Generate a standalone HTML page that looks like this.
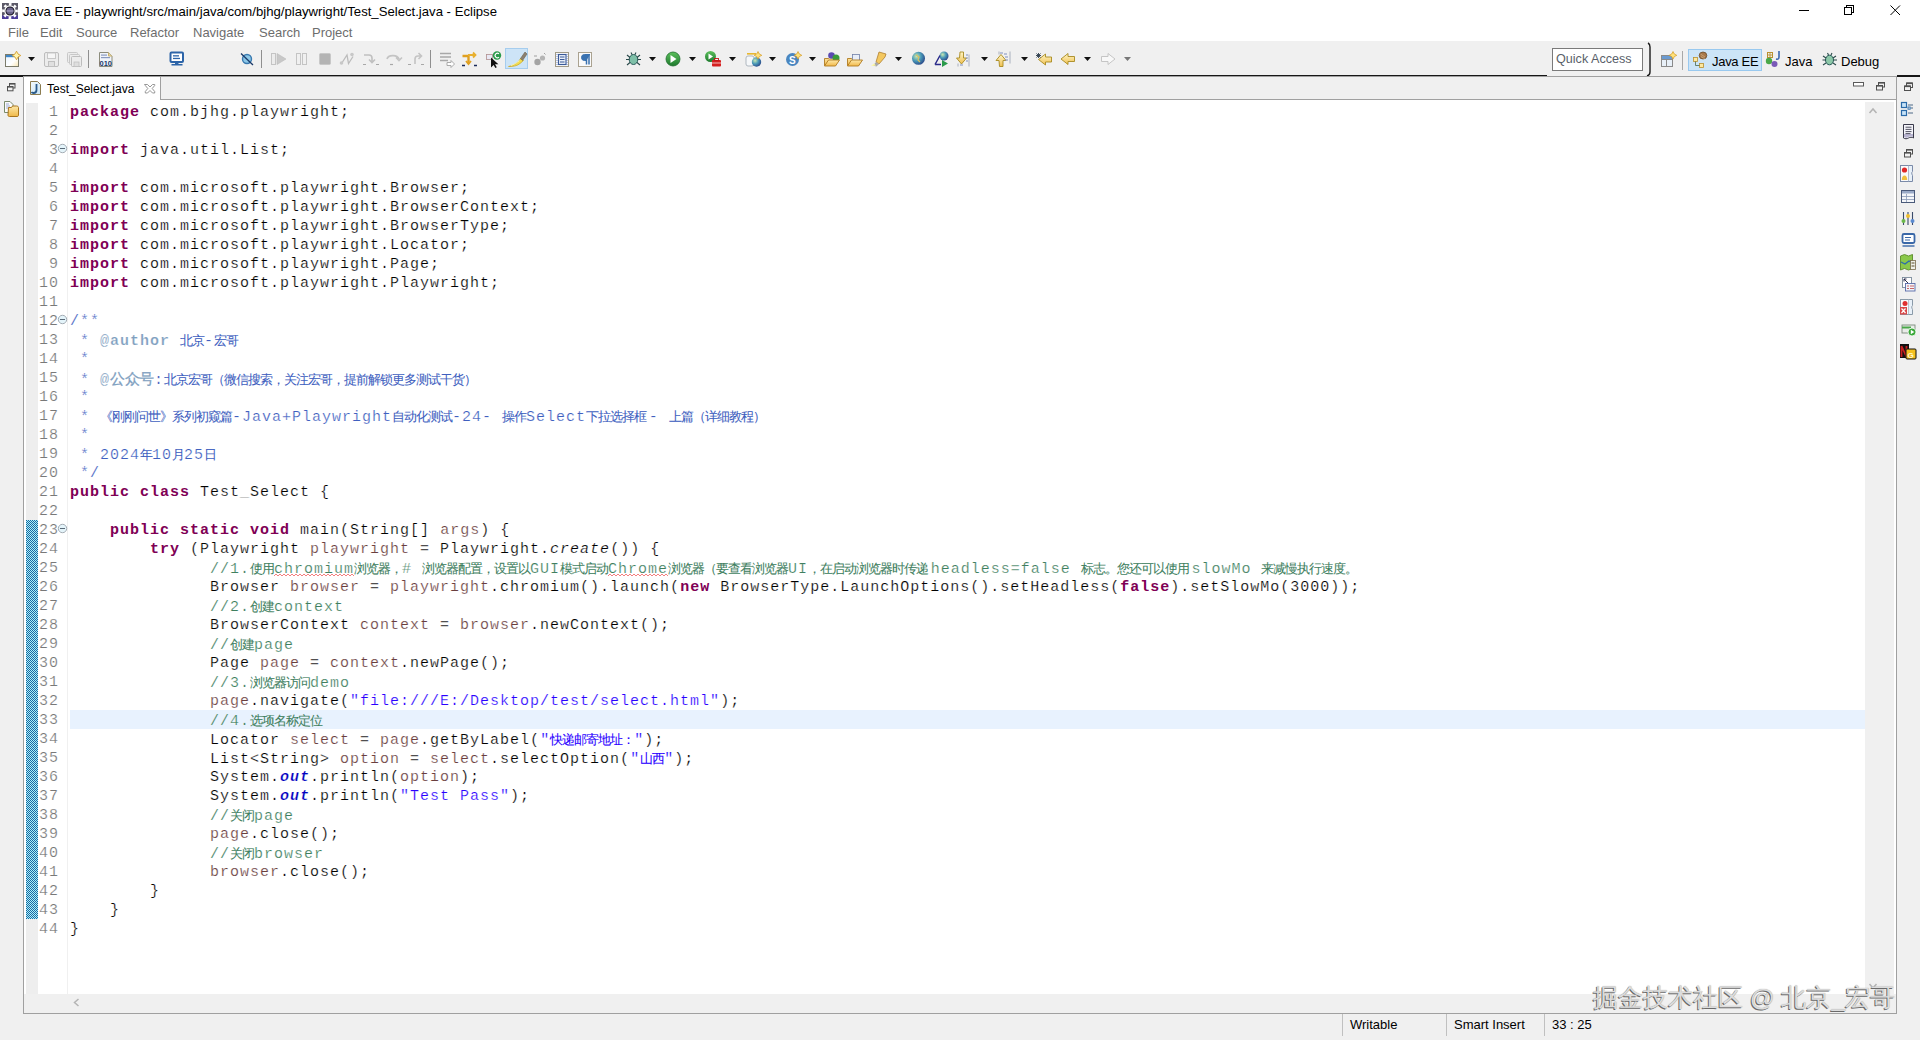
<!DOCTYPE html>
<html><head><meta charset="utf-8">
<style>
*{margin:0;padding:0;box-sizing:border-box}
html,body{width:1920px;height:1040px;overflow:hidden;background:#f0f0f0;font-family:"Liberation Sans",sans-serif;position:relative}
.a{position:absolute}
#titlebar{left:0;top:0;width:1920px;height:21px;background:#fff}
#menubar{left:0;top:21px;width:1920px;height:20px;background:#fff}
.menu{position:absolute;top:25px;font-size:13px;color:#6d6d6d}
#code{left:70px;top:103px;font-family:"Liberation Mono",monospace;font-size:15px;letter-spacing:1px;line-height:19px;color:#000;-webkit-text-stroke:0.22px #fff}
#code div{height:19px;white-space:pre}
#lnum{left:28px;top:103px;width:31px;font-family:"Liberation Mono",monospace;font-size:15px;letter-spacing:1px;line-height:19px;color:#787878;text-align:right;-webkit-text-stroke:0.2px #fff}
#lnum div{height:19px}
.k{color:#7f0055;font-weight:bold;-webkit-text-stroke:0}
.c{color:#3f7f5f}
.d{color:#3f5fbf}
.t{color:#7f9fbf;font-weight:bold}
.s{color:#2a00ff}
.v{color:#6a3e3e}
.f{color:#0000c0;font-style:italic;font-weight:bold}
.i{font-style:italic}
.z{font-family:"Liberation Sans",sans-serif;font-size:13px;letter-spacing:-1px;-webkit-text-stroke:0.08px currentColor}
</style></head><body>
<div class="a" id="titlebar"></div>
<div class="a" id="menubar"></div>
<svg class="a" style="left:0;top:0" width="1920" height="100" viewBox="0 0 1920 100">
<defs>
<linearGradient id="gY" x1="0" y1="0" x2="0" y2="1"><stop offset="0" stop-color="#fff6c8"/><stop offset="1" stop-color="#f0c050"/></linearGradient>
<linearGradient id="gG" x1="0" y1="0" x2="0" y2="1"><stop offset="0" stop-color="#5cc05c"/><stop offset="1" stop-color="#1e7a2e"/></linearGradient>
<linearGradient id="gF" x1="0" y1="0" x2="0" y2="1"><stop offset="0" stop-color="#fde8a8"/><stop offset="1" stop-color="#f2b94a"/></linearGradient>
<radialGradient id="gGlobe" cx="0.35" cy="0.35" r="0.7"><stop offset="0" stop-color="#c8e8b0"/><stop offset="0.5" stop-color="#4a9ab8"/><stop offset="1" stop-color="#2a4a8a"/></radialGradient>
<linearGradient id="gNew" x1="0" y1="0" x2="1" y2="1"><stop offset="0" stop-color="#e8f4ff"/><stop offset="0.6" stop-color="#ffffff"/><stop offset="1" stop-color="#f6e4b0"/></linearGradient>
<linearGradient id="gB" x1="0" y1="0" x2="0" y2="1"><stop offset="0" stop-color="#eaf4fc"/><stop offset="1" stop-color="#b8d8f0"/></linearGradient>
</defs>
<!-- title bar icon -->
<rect x="2" y="3" width="16" height="16" fill="#5c5a68"/>
<rect x="2" y="15.5" width="16" height="3.5" fill="#4b3c9a"/>
<circle cx="10" cy="11" r="6.7" fill="none" stroke="#fff" stroke-width="2.4" stroke-dasharray="2.6 2.66" transform="rotate(-11 10 11)"/>
<circle cx="10" cy="11" r="5.8" fill="#fff"/>
<circle cx="10" cy="11" r="4" fill="#6a6488" stroke="#15131f" stroke-width="1.1"/>
<rect x="6.5" y="10.2" width="7" height="1.5" fill="#9e98bc"/>
<!-- window controls -->
<rect x="1799" y="10" width="10" height="1" fill="#000"/>
<rect x="1846.5" y="5.5" width="7" height="7" fill="none" stroke="#000" stroke-width="1"/>
<rect x="1844.5" y="7.5" width="7" height="7" fill="#fff" stroke="#000" stroke-width="1"/>
<path d="M1890.5 5.5L1900 15M1900 5.5L1890.5 15" stroke="#000" stroke-width="1"/>

<!-- toolbar -->
<g>
<!-- new -->
<rect x="5.5" y="54.5" width="13" height="12" fill="url(#gNew)" stroke="#7b7b6b"/>
<rect x="6" y="55" width="9" height="2.2" fill="#3e86c8"/>
<path d="M16.5 51.2l1.5 2.8 2.8 1.5-2.8 1.5-1.5 2.8-1.5-2.8-2.8-1.5 2.8-1.5z" fill="#fff4b0" stroke="#d8a030" stroke-width="0.9"/>
<path d="M28 57h7l-3.5 4z" fill="#111"/>
<!-- save (disabled) -->
<rect x="44.5" y="52.5" width="14" height="14" rx="1.5" fill="#ececec" stroke="#bdbdbd"/>
<rect x="47.5" y="53" width="8" height="5.5" fill="#f6f6f6" stroke="#c8c8c8"/>
<rect x="48.5" y="61.5" width="6" height="5" fill="#e0e0e0" stroke="#c0c0c0"/>
<!-- save all -->
<rect x="67.5" y="52.5" width="10" height="10" rx="1" fill="#ececec" stroke="#c8c8c8"/>
<rect x="69.5" y="54.5" width="10" height="10" rx="1" fill="#ececec" stroke="#c8c8c8"/>
<rect x="71.5" y="56.5" width="10" height="10" rx="1" fill="#ececec" stroke="#bdbdbd"/>
<rect x="74" y="62" width="5" height="4.5" fill="#dedede" stroke="#c0c0c0" stroke-width="0.8"/>
<!-- sep -->
<rect x="88" y="50" width="1" height="18" fill="#8f8f8f"/>
<!-- binary -->
<path d="M99.5 52.5h9l3.5 3.5v10.5h-12.5z" fill="#f0f4fa" stroke="#8c8c7c"/>
<path d="M108.5 52.5v3.5h3.5" fill="#e8d8a0" stroke="#c8b070"/>
<rect x="101" y="54.5" width="6" height="1.2" fill="#8a9ac0"/><rect x="101" y="57" width="9" height="1.2" fill="#8a9ac0"/>
<text x="99.5" y="66" font-family="Liberation Sans" font-weight="bold" font-size="7.5" fill="#1a3a6a">010</text>
<!-- monitor -->
<rect x="170.5" y="52.5" width="12.5" height="9.5" rx="1" fill="#fff" stroke="#2c64a8" stroke-width="2"/>
<rect x="173" y="55.2" width="6" height="1.3" fill="#2c64a8"/><rect x="173" y="57.8" width="7" height="1.3" fill="#2c64a8"/>
<rect x="175" y="62.5" width="3.5" height="1.5" fill="#2c64a8"/><rect x="171.5" y="64" width="11" height="1.5" fill="#2c64a8"/>
<!-- skip breakpoints -->
<circle cx="247" cy="59" r="4.5" fill="#8cc8e8" stroke="#3a7ab0" stroke-width="1.4"/>
<path d="M241 53.5L253 65" stroke="#1a3a6a" stroke-width="1.3"/>
<rect x="261" y="50" width="1" height="18" fill="#8f8f8f"/>
<!-- resume disabled -->
<rect x="271.5" y="53.5" width="4" height="11" fill="#ececec" stroke="#c4c4c4"/>
<path d="M277 53.5l9 5.5-9 5.5z" fill="#c8c8c8" stroke="#bcbcbc" stroke-width="0.6"/>
<!-- suspend -->
<rect x="296.5" y="53.5" width="4" height="11" fill="#f0f0f0" stroke="#c4c4c4"/>
<rect x="302.5" y="53.5" width="4" height="11" fill="#f0f0f0" stroke="#c4c4c4"/>
<!-- terminate -->
<rect x="319.5" y="53.5" width="11" height="11" rx="1.2" fill="#b4b4b4" stroke="#c8c8c8"/>
<!-- disconnect -->
<path d="M341.5 63.5L347 55l1.5 8.5 4.5-7" fill="none" stroke="#bcbcbc" stroke-width="1.3"/>
<circle cx="341.5" cy="63" r="1.8" fill="#c8c8c8"/><circle cx="352" cy="54.5" r="1.8" fill="#c8c8c8"/>
<!-- step into -->
<path d="M364 55h5c2 0 3 1 3 3v4m-3-2.5l3 3 3-3" fill="none" stroke="#c0c0c0" stroke-width="1.6"/>
<path d="M363 64.5h3M376 64.5h3" stroke="#a8a8a8" stroke-width="1.2"/>
<!-- step over -->
<path d="M387 59c1-4 10-5 12 0m-3-1.5l3 3 3-3" fill="none" stroke="#c4c4c4" stroke-width="1.6"/>
<path d="M390 64.5h3" stroke="#a8a8a8" stroke-width="1.2"/>
<!-- step return -->
<path d="M415 64v-5c0-2 1-3 3-3h3m-2.5-3l3 3-3 3" fill="none" stroke="#c4c4c4" stroke-width="1.6"/>
<path d="M408 64.5h3M421 64.5h3" stroke="#a8a8a8" stroke-width="1.2"/>
<rect x="430" y="50" width="1" height="18" fill="#8f8f8f"/>
<!-- step filters -->
<path d="M440 53.5h11M440 57h11M440 60.5h8" stroke="#a8a8a8" stroke-width="1.4"/>
<path d="M447 62.5h4v-2l3.5 3.5-3.5 3.5v-2h-4z" fill="#fff" stroke="#a0a0a0" stroke-width="0.9"/>
<!-- drop to frame -->
<path d="M462.5 56h6v8" fill="none" stroke="#e0a020" stroke-width="2.4"/>
<path d="M466 61l2.5 3 2.5-3" fill="none" stroke="#e0a020" stroke-width="1.8"/>
<path d="M468 55h7m-2-2.5l2.5 2.5-2.5 2.5" fill="none" stroke="#e8b030" stroke-width="1.8"/>
<path d="M462 65.5h3M474 65.5h3" stroke="#1a2a5a" stroke-width="1.4"/>
<!-- checkin -->
<rect x="486.5" y="54.5" width="6" height="5" fill="#e8e8f4" stroke="#b09090" stroke-width="0.8"/>
<circle cx="497" cy="55.5" r="4.2" fill="#2a9a4a"/>
<path d="M499 53.8a2.3 2.3 0 1 0 0 3.4" fill="none" stroke="#fff" stroke-width="1.1"/>
<path d="M491 57.5v10l2.6-2.6 1.8 3.1 1.4-0.8-1.8-3h3.4z" fill="#111"/>
<!-- highlighted toggle -->
<rect x="505.5" y="48.5" width="22" height="20" fill="#cde4f7" stroke="#a6cdee"/>
<path d="M508.5 66.5c3-0.5 7-2 10-5l2.5-3.5 2.5 2.5-3.5 3c-3 2.5-7 3.2-11.5 3z" fill="#f2dc50" stroke="#c8a820" stroke-width="0.7"/>
<path d="M511 65.5c3-1 6-2.5 8.5-5" stroke="#fff6a8" stroke-width="1" fill="none"/>
<path d="M520.5 58.5l4.5-6.5 2 2-4.5 6.5z" fill="#8c8070" stroke="#6a6050" stroke-width="0.6"/>
<!-- grey dots -->
<circle cx="537.5" cy="62" r="3.2" fill="#a4a4a4"/><circle cx="542.5" cy="58" r="2.6" fill="#b4b4b4"/>
<path d="M534 56h3M544 53l1.5 1.5" stroke="#a0a0a0" stroke-width="1"/>
<!-- block select -->
<rect x="555.5" y="52.5" width="13" height="14" fill="#f8f8fa" stroke="#a09a88"/>
<rect x="558.5" y="54.5" width="7.5" height="10" fill="#e8eef8" stroke="#3a5a98" stroke-width="1.1"/>
<path d="M560 57h4.5M560 59.5h4.5M560 62h4.5" stroke="#3a5a98" stroke-width="1.1"/>
<path d="M557 54v11M567 54v11" stroke="#5a7ab8" stroke-width="0.8" stroke-dasharray="1 1"/>
<!-- pilcrow -->
<rect x="578.5" y="52.5" width="13" height="14" fill="#fafafa" stroke="#aaa290"/>
<path d="M586.5 54.5v10M589 54.5v10" stroke="#3a72b0" stroke-width="1.5"/>
<path d="M590 54.5h-5.5a3 3 0 0 0 0 6h2" fill="#3a72b0" stroke="#3a72b0" stroke-width="1"/>
<!-- bug -->
<ellipse cx="633.5" cy="59.5" rx="4.3" ry="5" fill="#7ec0a8" stroke="#2a5a5a" stroke-width="1"/>
<path d="M627 55l3 2.5M640 55l-3 2.5M626 59.5h3.5M641 59.5h-3.5M627 65l3-2.5M640 65l-3-2.5M631 52.5l1 2M636 52.5l-1 2" stroke="#2a4a4a" stroke-width="1.1"/>
<path d="M649 57h7l-3.5 4z" fill="#111"/>
<!-- run -->
<circle cx="673" cy="59" r="7" fill="url(#gG)" stroke="#1f6f2f" stroke-width="0.8"/>
<path d="M670.5 55v8l6-4z" fill="#fff"/>
<path d="M689 57h7l-3.5 4z" fill="#111"/>
<!-- run server -->
<circle cx="710.5" cy="56.5" r="5.5" fill="url(#gG)"/>
<path d="M708.5 53.5v6l4.5-3z" fill="#fff"/>
<rect x="712" y="60" width="9" height="6.5" rx="1" fill="#d42020"/>
<rect x="714.5" y="58.5" width="4" height="2" fill="none" stroke="#c01818" stroke-width="0.9"/>
<path d="M712 63h9" stroke="#fff" stroke-width="0.7"/>
<path d="M729 57h7l-3.5 4z" fill="#111"/>
<!-- new server -->
<rect x="746" y="56" width="8" height="10" rx="2" fill="#f6f8fa" stroke="#b0b8c0"/>
<rect x="747" y="53" width="9" height="1.6" fill="#e8b830"/>
<circle cx="756.5" cy="62" r="4.7" fill="url(#gGlobe)"/>
<path d="M758 51.5l1.3 2.5 2.5 1.3-2.5 1.3-1.3 2.5-1.3-2.5-2.5-1.3 2.5-1.3z" fill="#ffe27a" stroke="#d49a20" stroke-width="0.7"/>
<path d="M769 57h7l-3.5 4z" fill="#111"/>
<!-- S icon -->
<circle cx="792.5" cy="59.5" r="6.5" fill="#4a86c0"/>
<text x="789" y="63.5" font-family="Liberation Sans" font-weight="bold" font-size="10" fill="#fff">S</text>
<path d="M798 51.5l1.3 2.5 2.5 1.3-2.5 1.3-1.3 2.5-1.3-2.5-2.5-1.3 2.5-1.3z" fill="#ffe27a" stroke="#d49a20" stroke-width="0.7"/>
<path d="M809 57h7l-3.5 4z" fill="#111"/>
<!-- folder + globes -->
<path d="M824.5 58.5h4l1 -1h4v8h-9z" fill="url(#gF)" stroke="#b07a20" stroke-width="0.9"/>
<circle cx="831.5" cy="55.5" r="3.3" fill="#5a4ab0"/><circle cx="836" cy="58" r="3.5" fill="#3a9a3a"/>
<path d="M824.5 66h11l4-6h-11z" fill="url(#gF)" stroke="#b07a20" stroke-width="0.9"/>
<!-- folder -->
<path d="M847.5 58.5h4l1 -1h6v8h-11z" fill="url(#gF)" stroke="#b07a20" stroke-width="0.9"/>
<rect x="852.5" y="54.5" width="7" height="6" fill="#e8eef8" stroke="#7080a8" stroke-width="0.8"/>
<path d="M847.5 66h11l4-6h-11z" fill="url(#gF)" stroke="#b07a20" stroke-width="0.9"/>
<!-- flashlight -->
<path d="M879 52l7 2-1 3-6 7-3-2z" fill="#f4c860" stroke="#b08030" stroke-width="0.8"/>
<path d="M876 62l3 2-2.5 2.5-3.5-1z" fill="#a8a8a8"/>
<path d="M871 66l3-2.5 2 2z" fill="#fff8a0"/>
<path d="M895 57h7l-3.5 4z" fill="#111"/>
<!-- globe -->
<circle cx="918.5" cy="58.3" r="6.5" fill="url(#gGlobe)"/>
<path d="M916 55l3 2 -1 3 2 2" fill="none" stroke="#d8c060" stroke-width="1.2"/>
<!-- search/triangle -->
<circle cx="944" cy="56" r="4.5" fill="url(#gGlobe)"/>
<path d="M935 64.5l5-9M935 64.5h6" stroke="#2a2a8a" stroke-width="1.5" fill="none"/>
<path d="M942 60v7l6-3.5z" fill="#2a9a4a"/>
<!-- next annotation -->
<path d="M960 52h3.5v6h3l-5 6-5-6h3z" fill="url(#gY)" stroke="#a88a20" stroke-width="0.9"/>
<path d="M969 54.5v12M958 66.5v-3" stroke="#a0a8b8" stroke-width="0.9"/>
<path d="M966 55h2M966 58h2M966 61h2M960 65h3" stroke="#8090c0" stroke-width="1"/>
<path d="M981 57h7l-3.5 4z" fill="#111"/>
<!-- prev annotation -->
<path d="M999.5 66.5h3.5v-6h3l-5-6-5 6h3z" fill="url(#gY)" stroke="#a88a20" stroke-width="0.9"/>
<path d="M1010 51.5v12M999 51.5v3" stroke="#a0a8b8" stroke-width="0.9"/>
<path d="M1000 53h3M1004 54h3M1005 57h3M1005 60h3" stroke="#8090c0" stroke-width="1"/>
<path d="M1021 57h7l-3.5 4z" fill="#111"/>
<!-- last edit -->
<path d="M1045.5 54v3h6v5h-6v3l-7-5.5z" fill="url(#gY)" stroke="#a88a20" stroke-width="0.9"/>
<path d="M1036.5 53.5l4 4M1040.5 53.5l-4 4M1036 55.5h5M1038.5 53v5" stroke="#2a3a4a" stroke-width="0.9"/>
<!-- back -->
<path d="M1068 53.5v3h6.5v5h-6.5v3l-7-5.5z" fill="url(#gY)" stroke="#a88a20" stroke-width="0.9"/>
<path d="M1084 57h7l-3.5 4z" fill="#111"/>
<!-- forward disabled -->
<path d="M1108 53.5v3h-6.5v5h6.5v3l7-5.5z" fill="#f8f8f8" stroke="#c0c0c0" stroke-width="0.9"/>
<path d="M1124 57h7l-3.5 4z" fill="#777"/>
</g>

<!-- right side of toolbar -->
<rect x="1552.5" y="48.5" width="90" height="22" fill="#fff" stroke="#7a7a7a"/>
<path d="M1648 43c2 1 2 2 2 4v25c0 2 -1 3.5 -3 4" fill="none" stroke="#1a1a1a" stroke-width="1.4"/>
<!-- perspective icon -->
<rect x="1661.5" y="55.5" width="11" height="11" fill="#e8f0f8" stroke="#8a8a8a"/>
<path d="M1661.5 59.5h11M1666.5 55.5v11" stroke="#8a8a8a" stroke-width="1"/>
<rect x="1662" y="56" width="10" height="3" fill="#6a9ad0"/>
<path d="M1673 51.5l1.3 2.5 2.5 1.3-2.5 1.3-1.3 2.5-1.3-2.5-2.5-1.3 2.5-1.3z" fill="#ffe27a" stroke="#d49a20" stroke-width="0.7"/>
<rect x="1682" y="51" width="1" height="19" fill="#a8a8a8"/>
<!-- Java EE button -->
<rect x="1688.5" y="49.5" width="73" height="21" fill="#cce4f7" stroke="#99c9ef"/>
<rect x="1693.5" y="57.5" width="4" height="4" fill="#fde8a0" stroke="#b89030" stroke-width="0.8"/>
<rect x="1699.5" y="63.5" width="4" height="4" fill="#fde8a0" stroke="#b89030" stroke-width="0.8"/>
<path d="M1695.5 61.5v4h4" fill="none" stroke="#4a6a4a" stroke-width="0.8"/>
<ellipse cx="1703" cy="55.5" rx="3.8" ry="3.5" fill="#a87848" stroke="#6a4a28" stroke-width="0.8"/>
<path d="M1700.5 54l4.5 3M1701 56.5l4 2.5" stroke="#d8b890" stroke-width="0.6"/>
<!-- Java icon -->
<rect x="1767.5" y="52.5" width="5" height="5" fill="none" stroke="#b89030" stroke-width="1"/>
<path d="M1767 55h6M1770 52v6" stroke="#b89030" stroke-width="0.9"/>
<circle cx="1769" cy="61" r="3.2" fill="#4aa84a"/>
<circle cx="1774.5" cy="64" r="3" fill="#7a5ab8"/>
<path d="M1779 51v6c0 2-1 2.5-3 2" fill="none" stroke="#3a68b0" stroke-width="1.6"/>
<!-- Debug icon -->
<ellipse cx="1829.5" cy="60" rx="4" ry="4.8" fill="#8cc8a8" stroke="#2a5a5a" stroke-width="1"/>
<path d="M1823 56l3 2M1836 56l-3 2M1822.5 60h3.5M1837 60h-3.5M1823 65l3-2M1836 65l-3-2M1827.5 53l1 2M1832 53l-1 2" stroke="#2a4a4a" stroke-width="1.1"/>
</svg>

<div class="a" style="left:0;top:75px;width:1547px;height:2px;background:#161616"></div>
<div class="a" style="left:1647px;top:75px;width:1px;height:1px;background:#161616"></div>
<div class="a" style="left:1897px;top:75px;width:23px;height:2px;background:#161616"></div>
<div class="a" style="left:1556px;top:52px;font-size:12.6px;color:#5a5f6a">Quick Access</div>
<div class="a" style="left:1712px;top:54px;font-size:13px;letter-spacing:-0.3px;color:#000">Java EE</div>
<div class="a" style="left:1785px;top:54px;font-size:13px;color:#000">Java</div>
<div class="a" style="left:1841px;top:54px;font-size:13px;color:#000">Debug</div>

<div class="a" style="left:23px;top:4px;font-size:13.15px;color:#000">Java EE - playwright/src/main/java/com/bjhg/playwright/Test_Select.java - Eclipse</div>
<div class="menu" style="left:8px">File</div>
<div class="menu" style="left:40px">Edit</div>
<div class="menu" style="left:76px">Source</div>
<div class="menu" style="left:130px">Refactor</div>
<div class="menu" style="left:193px">Navigate</div>
<div class="menu" style="left:259px">Search</div>
<div class="menu" style="left:312px">Project</div>

<!-- editor frame -->
<div class="a" style="left:23px;top:76px;width:1874px;height:938px;border:1px solid #a0a0a0;background:#f0f0f0"></div>
<div class="a" style="left:24px;top:99px;width:1872px;height:1px;background:#a0a0a0"></div>
<div class="a" style="left:24px;top:77px;width:137px;height:23px;background:#fff;border-right:1px solid #a0a0a0"></div>
<div class="a" style="left:24px;top:100px;width:1872px;height:894px;background:#fff"></div>
<div class="a" style="left:26px;top:103px;width:12px;height:891px;background:#eeeeee"></div>
<svg class="a" style="left:26px;top:520px" width="12" height="399"><defs><pattern id="chk" width="2" height="2" patternUnits="userSpaceOnUse"><rect width="2" height="2" fill="#a8f4f8"/><rect width="1" height="1" fill="#1e64a4"/><rect x="1" y="1" width="1" height="1" fill="#1e64a4"/></pattern></defs><rect width="12" height="399" fill="url(#chk)" shape-rendering="crispEdges"/></svg>
<div class="a" style="left:70px;top:710px;width:1795px;height:19px;background:#e8f2fe"></div>
<div class="a" style="left:67px;top:100px;width:1px;height:894px;background:#f0f0f0"></div>
<div class="a" style="left:1865px;top:102px;width:29px;height:892px;background:#f0f0f0"></div>

<div class="a" style="left:47px;top:82px;font-size:12px;color:#000">Test_Select.java</div>

<div class="a" id="lnum">
<div>1</div><div>2</div><div>3</div><div>4</div><div>5</div><div>6</div><div>7</div><div>8</div><div>9</div><div>10</div><div>11</div><div>12</div><div>13</div><div>14</div><div>15</div><div>16</div><div>17</div><div>18</div><div>19</div><div>20</div><div>21</div><div>22</div><div>23</div><div>24</div><div>25</div><div>26</div><div>27</div><div>28</div><div>29</div><div>30</div><div>31</div><div>32</div><div>33</div><div>34</div><div>35</div><div>36</div><div>37</div><div>38</div><div>39</div><div>40</div><div>41</div><div>42</div><div>43</div><div>44</div>
</div>

<div class="a" id="code">
<div><span class="k">package</span> com.bjhg.playwright;</div>
<div></div>
<div><span class="k">import</span> java.util.List;</div>
<div></div>
<div><span class="k">import</span> com.microsoft.playwright.Browser;</div>
<div><span class="k">import</span> com.microsoft.playwright.BrowserContext;</div>
<div><span class="k">import</span> com.microsoft.playwright.BrowserType;</div>
<div><span class="k">import</span> com.microsoft.playwright.Locator;</div>
<div><span class="k">import</span> com.microsoft.playwright.Page;</div>
<div><span class="k">import</span> com.microsoft.playwright.Playwright;</div>
<div></div>
<div class="d">/**</div>
<div class="d"> * <span class="t">@author</span> <span class="z">北京</span>-<span class="z">宏哥</span></div>
<div class="d"> *</div>
<div class="d"> * <span class="t">@<span class="z" style="font-size:15px;letter-spacing:-0.33px;font-weight:normal;-webkit-text-stroke:0.3px currentColor">公众号</span></span>:<span class="z">北京宏哥（微信搜索，关注宏哥，提前解锁更多测试干货）</span></div>
<div class="d"> *</div>
<div class="d"> * <span class="z">《刚刚问世》系列初窥篇</span>-Java+Playwright<span class="z">自动化测试</span>-24- <span class="z">操作</span>Select<span class="z">下拉选择框 </span>- <span class="z">上篇（详细教程）</span></div>
<div class="d"> *</div>
<div class="d"> * 2024<span class="z">年</span>10<span class="z">月</span>25<span class="z">日</span></div>
<div class="d"> */</div>
<div><span class="k">public</span> <span class="k">class</span> Test_Select {</div>
<div></div>
<div>    <span class="k">public</span> <span class="k">static</span> <span class="k">void</span> main(String[] <span class="v">args</span>) {</div>
<div>        <span class="k">try</span> (Playwright <span class="v">playwright</span> = Playwright.<span class="i">create</span>()) {</div>
<div class="c">              //1.<span class="z">使用</span>chromium<span class="z">浏览器，</span># <span class="z">浏览器配置，设置以</span>GUI<span class="z">模式启动</span>Chrome<span class="z">浏览器（要查看浏览器</span>UI<span class="z">，在启动浏览器时传递 </span>headless=false <span class="z">标志。您还可以使用 </span>slowMo <span class="z">来减慢执行速度。</span></div>
<div>              Browser <span class="v">browser</span> = <span class="v">playwright</span>.chromium().launch(<span class="k">new</span> BrowserType.LaunchOptions().setHeadless(<span class="k">false</span>).setSlowMo(3000));</div>
<div class="c">              //2.<span class="z">创建</span>context</div>
<div>              BrowserContext <span class="v">context</span> = <span class="v">browser</span>.newContext();</div>
<div class="c">              //<span class="z">创建</span>page</div>
<div>              Page <span class="v">page</span> = <span class="v">context</span>.newPage();</div>
<div class="c">              //3.<span class="z">浏览器访问</span>demo</div>
<div>              <span class="v">page</span>.navigate(<span class="s">"file:///E:/Desktop/test/select.html"</span>);</div>
<div class="c">              //4.<span class="z">选项名称定位</span></div>
<div>              Locator <span class="v">select</span> = <span class="v">page</span>.getByLabel(<span class="s">"<span class="z">快递邮寄地址：</span>"</span>);</div>
<div>              List&lt;String&gt; <span class="v">option</span> = <span class="v">select</span>.selectOption(<span class="s">"<span class="z">山西</span>"</span>);</div>
<div>              System.<span class="f">out</span>.println(<span class="v">option</span>);</div>
<div>              System.<span class="f">out</span>.println(<span class="s">"Test Pass"</span>);</div>
<div class="c">              //<span class="z">关闭</span>page</div>
<div>              <span class="v">page</span>.close();</div>
<div class="c">              //<span class="z">关闭</span>browser</div>
<div>              <span class="v">browser</span>.close();</div>
<div>        }</div>
<div>    }</div>
<div>}</div>
</div>

<svg class="a" style="left:0;top:0" width="1920" height="1040" viewBox="0 0 1920 1040">
<defs>
<linearGradient id="gF2" x1="0" y1="0" x2="0" y2="1"><stop offset="0" stop-color="#fde8a8"/><stop offset="1" stop-color="#f0b848"/></linearGradient>
<linearGradient id="gJ" x1="0" y1="0" x2="1" y2="1"><stop offset="0" stop-color="#f4fbff"/><stop offset="1" stop-color="#c8e4f4"/></linearGradient>
</defs>
<!-- left panel restore -->
<rect x="9.5" y="83.5" width="5.5" height="4.5" fill="none" stroke="#505050" stroke-width="1"/>
<rect x="9.5" y="83" width="5.5" height="1.6" fill="#505050"/>
<rect x="7.5" y="86.5" width="5.5" height="4.3" fill="#f0f0f0" stroke="#505050" stroke-width="1"/>
<rect x="7.5" y="86" width="5.5" height="1.6" fill="#505050"/>
<!-- package explorer -->
<path d="M4.5 101.5h5.5l3 3v8h-8.5z" fill="#fafafa" stroke="#7a8a6a" stroke-width="1"/>
<path d="M6 104h3M6 106h4M6 108h3" stroke="#8898c8" stroke-width="0.8"/>
<path d="M8.5 107.5h3l1-1.5h4c1 0 2 .5 2 1.5v7.5c0 1-.5 1.5-1.5 1.5h-7.5c-1 0-1.5-.5-1.5-1.5z" fill="url(#gF2)" stroke="#a8741c" stroke-width="1"/>
<!-- tab java icon -->
<path d="M30.5 81.5h7l3 3v10h-10z" fill="url(#gJ)" stroke="#8c7c50" stroke-width="1"/>
<path d="M36.5 84v6c0 2.2-1.2 3-3 3-1 0-1.6-.4-2-1" fill="none" stroke="#2a5a8a" stroke-width="1.8"/>
<!-- tab close -->
<path d="M144.5 84.5l3 0 2.5 2.5 2.5-2.5h2.2v1l-2.5 3 2.5 3v1.5h-2.2l-2.5-2.5-2.5 2.5h-2.2v-1.5l2.5-3-2.5-3z" fill="#fff" stroke="#8a8a8a" stroke-width="0.9"/>
<!-- editor min / restore -->
<rect x="1853.5" y="82.5" width="10" height="3.5" fill="#fff" stroke="#5a5a5a" stroke-width="1"/>
<rect x="1878.5" y="82.5" width="6" height="4.5" fill="none" stroke="#505050"/>
<rect x="1878.5" y="82" width="6" height="1.6" fill="#505050"/>
<rect x="1876.5" y="85.5" width="6" height="4.5" fill="#f0f0f0" stroke="#505050"/>
<rect x="1876.5" y="85" width="6" height="1.6" fill="#505050"/>
<!-- right panel restore (2) -->
<rect x="1906.5" y="83" width="6" height="4.5" fill="none" stroke="#505050"/>
<rect x="1906.5" y="82.5" width="6" height="1.6" fill="#505050"/>
<rect x="1904.5" y="86" width="6" height="4.5" fill="#f0f0f0" stroke="#505050"/>
<rect x="1904.5" y="85.5" width="6" height="1.6" fill="#505050"/>
<rect x="1906.5" y="149.5" width="6" height="4.5" fill="none" stroke="#505050"/>
<rect x="1906.5" y="149" width="6" height="1.6" fill="#505050"/>
<rect x="1904.5" y="152.5" width="6" height="4.5" fill="#f0f0f0" stroke="#505050"/>
<rect x="1904.5" y="152" width="6" height="1.6" fill="#505050"/>
<!-- outline icon -->
<rect x="1901.5" y="102.5" width="5" height="5" fill="#c8e4f8" stroke="#2a6aa8" stroke-width="1.2"/>
<rect x="1901.5" y="110.5" width="5" height="5" fill="#c8e4f8" stroke="#2a6aa8" stroke-width="1.2"/>
<rect x="1908" y="107" width="2.2" height="2.2" fill="none" stroke="#2a6aa8" stroke-width="0.9"/>
<path d="M1908 105h5M1911 108h2M1908 113h5" stroke="#3a5a7a" stroke-width="0.9"/>
<!-- document icon -->
<path d="M1903.5 124.5h10v13.5c-1.5-1-3.5-1-5 0s-3.5 1-5 0z" fill="#f4f4fa" stroke="#3a3a4a" stroke-width="1"/>
<path d="M1904 134h9v3c-1.5-1-3.5-1-4.5 0s-3 1-4.5 0z" fill="#b8b4d0"/>
<path d="M1905.5 127.2h6M1905.5 129.4h6M1905.5 131.6h6M1905.5 133.6h5" stroke="#2a2a3a" stroke-width="0.8"/>
<!-- breakpoints-ish -->
<rect x="1900.5" y="165.5" width="8" height="16" fill="#fafafa" stroke="#7a8aa8" stroke-width="1"/>
<path d="M1908.5 165.5h4v6c-1 1-1 2 0 4v6h-4" fill="#e8f0f8" stroke="#7a8aa8" stroke-width="1"/>
<circle cx="1904.5" cy="170" r="2.6" fill="#e02828"/>
<path d="M1901.8 180c0-3 1-4.5 2.7-4.5s2.7 1.5 2.7 4.5z" fill="#f0c040"/>
<!-- table icon -->
<rect x="1901.5" y="190.5" width="13" height="12" fill="#f4f6fa" stroke="#4a5a7a" stroke-width="1"/>
<rect x="1902" y="191" width="12" height="2.5" fill="#9aaac8"/>
<path d="M1902 196.5h12M1902 199.5h12M1906.5 194v8" stroke="#8a9ab8" stroke-width="0.8"/>
<!-- sliders -->
<path d="M1903.5 212v13M1908 212v13M1912.5 212v13" stroke="#3a4a6a" stroke-width="1.1"/>
<circle cx="1903.5" cy="221" r="2" fill="#6ab84a"/><circle cx="1908" cy="216" r="2" fill="#f0c030"/><circle cx="1912.5" cy="221" r="2" fill="#5a8ad0"/>
<!-- monitor -->
<rect x="1902.5" y="234" width="12" height="9" rx="1.5" fill="#fff" stroke="#3a68a8" stroke-width="1.8"/>
<path d="M1905 237.5h6M1905 240h5" stroke="#3a68a8" stroke-width="1"/>
<path d="M1902.5 246h12" stroke="#3a68a8" stroke-width="1.4"/>
<!-- map -->
<path d="M1900.5 256l4 -1.5 4 1.5 4-1.5v14l-4 1.5-4-1.5-4 1.5z" fill="#8ac84a" stroke="#5a8a2a" stroke-width="0.9"/>
<path d="M1901 262l4 2 4-3 4 2" stroke="#2a6ab0" stroke-width="1.2" fill="none"/>
<rect x="1910.5" y="260.5" width="5" height="9" fill="#f0f0e8" stroke="#7a6a4a" stroke-width="0.8"/>
<path d="M1911.5 263h3M1911.5 266h3" stroke="#5a4a2a" stroke-width="1"/>
<!-- x icon -->
<rect x="1902.5" y="277.5" width="9" height="10" fill="#fff" stroke="#7a8a9a" stroke-width="0.9"/>
<rect x="1905.5" y="283.5" width="9.5" height="7.5" fill="#f0f4fa" stroke="#5a6aa8" stroke-width="0.9"/>
<path d="M1904 279l4 4M1904 279v2.5M1904 279h2.5" stroke="#1a1a3a" stroke-width="0.9"/>
<path d="M1907 286h2M1910 286h4M1907 288.5h2M1910 288.5h4" stroke="#c04040" stroke-width="0.8"/>
<!-- red x breakpoints -->
<rect x="1900.5" y="299.5" width="8" height="15" fill="#fafafa" stroke="#8a9aa8" stroke-width="1"/>
<path d="M1908.5 299.5h4v6c-1 1-1 2 0 4v5h-4" fill="#e8f0f8" stroke="#8a9aa8" stroke-width="1"/>
<circle cx="1905" cy="303.5" r="2.5" fill="#e03030"/>
<rect x="1900" y="307" width="7" height="7.5" fill="#d84848"/>
<path d="M1901.5 308.5l4 4.5M1905.5 308.5l-4 4.5" stroke="#fff" stroke-width="1.2"/>
<!-- green play -->
<rect x="1902" y="325" width="13" height="8" fill="#e8ece8" stroke="#7a8a7a" stroke-width="0.9"/>
<rect x="1902" y="326.5" width="9" height="2" fill="#4aa84a"/>
<circle cx="1912" cy="332" r="4" fill="#3aa83a" stroke="#fff" stroke-width="0.8"/>
<path d="M1910.8 329.8v4.4l3.5-2.2z" fill="#fff"/>
<!-- NG -->
<rect x="1900" y="344" width="9" height="14" fill="#111"/>
<path d="M1901.5 357v-11l5 11v-11" stroke="#c82020" stroke-width="1.8" fill="none"/>
<rect x="1906" y="349" width="10" height="10" rx="1" fill="#f4c020" stroke="#111" stroke-width="1"/>
<text x="1907.5" y="357.5" font-family="Liberation Sans" font-weight="bold" font-size="8" fill="#fff8d0">G</text>
<!-- fold icons -->
<g fill="#e4f4fa" stroke="#a4acb4" stroke-width="1">
<circle cx="62.5" cy="148.5" r="4.2"/><circle cx="62.5" cy="319.5" r="4.2"/><circle cx="62.5" cy="528.5" r="4.2"/>
</g>
<path d="M60 148.5h5M60 319.5h5M60 528.5h5" stroke="#5a6a78" stroke-width="1.2"/>
<!-- scroll chevrons -->
<path d="M1869.5 984l3.5 4 3.5-4" fill="none" stroke="#b4b4b4" stroke-width="1.5"/>
<path d="M1869.5 113l3.5-4 3.5 4" fill="none" stroke="#b4b4b4" stroke-width="1.5"/>
<path d="M78.5 999l-4 3.5 4 3.5" fill="none" stroke="#b4b4b4" stroke-width="1.5"/>
<!-- spell squiggles -->
<path d="M274 576 l2 -2 l2 2 l2 -2 l2 2 l2 -2 l2 2 l2 -2 l2 2 l2 -2 l2 2 l2 -2 l2 2 l2 -2 l2 2 l2 -2 l2 2 l2 -2 l2 2 l2 -2 l2 2 l2 -2 l2 2 l2 -2 l2 2 l2 -2 l2 2 l2 -2 l2 2 l2 -2 l2 2 l2 -2 l2 2 l2 -2 l2 2 l2 -2 l2 2 l2 -2 l2 2 l2 -2 l2 2" fill="none" stroke="#f06060" stroke-width="0.8"/>
<path d="M608 576 l2 -2 l2 2 l2 -2 l2 2 l2 -2 l2 2 l2 -2 l2 2 l2 -2 l2 2 l2 -2 l2 2 l2 -2 l2 2 l2 -2 l2 2 l2 -2 l2 2 l2 -2 l2 2 l2 -2 l2 2 l2 -2 l2 2 l2 -2 l2 2 l2 -2 l2 2 l2 -2 l2 2" fill="none" stroke="#f06060" stroke-width="0.8"/>
</svg>

<div class="a" style="left:1593px;top:983px;font-size:24.5px;line-height:30px;color:#dcdcdc;text-shadow:-1px 1px 0 #6a6a6a,0 0 1px #999;white-space:pre">掘金技术社区 @ 北京_宏哥</div>
<!-- status bar -->
<div class="a" style="left:1342px;top:1014px;width:1px;height:22px;background:#c0c0c0"></div>
<div class="a" style="left:1446px;top:1014px;width:1px;height:22px;background:#c0c0c0"></div>
<div class="a" style="left:1544px;top:1014px;width:1px;height:22px;background:#c0c0c0"></div>
<div class="a" style="left:1350px;top:1017px;font-size:13px;color:#000">Writable</div>
<div class="a" style="left:1454px;top:1017px;font-size:13px;color:#000">Smart Insert</div>
<div class="a" style="left:1552px;top:1017px;font-size:13px;color:#000">33 : 25</div>
</body></html>
